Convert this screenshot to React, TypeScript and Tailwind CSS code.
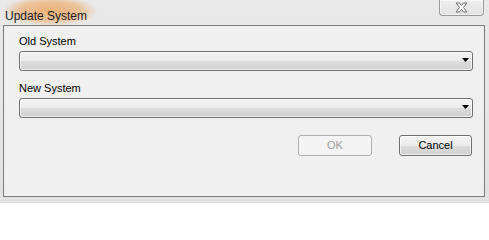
import React from "react";

const font = { fontFamily: '"Liberation Sans", Arial, sans-serif' };

function ComboBox() {
  return (
    <div className="relative h-[20px] w-full rounded-[3px] border border-[#707070] bg-[linear-gradient(to_bottom,#f3f3f3_0%,#ebebeb_50%,#dddddd_51%,#d0d0d0_100%)] shadow-[inset_0_0_0_1px_rgba(255,255,255,0.7)]">
      <div className="flex h-full items-center justify-end pr-[3px] pb-[2px]">
        <svg width="7" height="4" viewBox="0 0 7 4">
          <polygon points="0,0 7,0 3.5,4" fill="#000" />
        </svg>
      </div>
    </div>
  );
}

function CloseButton() {
  return (
    <div className="flex h-[16px] w-[45px] items-center justify-center rounded-b-[4px] border border-t-0 border-[#9a9a9a] bg-[linear-gradient(to_bottom,#efefef,#e2e2e2)] shadow-[inset_0_0_0_1px_rgba(255,255,255,0.6)]">
      <svg width="15" height="11" viewBox="0 0 15 11">
        <polygon
          points="2,1 5.5,1 7.5,3.5 9.5,1 13,1 9.5,5.5 13,10 9.5,10 7.5,7.5 5.5,10 2,10 5.5,5.5"
          fill="#ffffff"
          stroke="#6f6f6f"
          strokeWidth="1"
          strokeLinejoin="round"
        />
      </svg>
    </div>
  );
}

export default function App() {
  return (
    <div
      className="flex h-[203px] w-[489px] flex-col overflow-hidden bg-[linear-gradient(to_bottom,#e9e9e9,#e2e2e2)]"
      style={font}
    >
      {/* title bar */}
      <div className="flex h-[25px] items-start">
        <div className="relative pl-[5px] pt-[3px]">
          <div className="absolute left-[2px] top-[-4px] h-[30px] w-[96px] bg-[radial-gradient(ellipse_at_center,rgba(236,168,100,0.85)_0%,rgba(236,168,100,0.6)_45%,rgba(236,168,100,0)_70%)]" />
          <span className="relative text-[12px] leading-[15px] text-[#1b1b1b]">
            Update System
          </span>
        </div>
        <div className="ml-auto mr-[5px]">
          <CloseButton />
        </div>
      </div>

      {/* client area */}
      <div className="mx-[3px] h-[172px] w-[482px] border border-[#7c7c7c] bg-[#f0f0f0] pl-[15px] pr-[11px] pt-[9px]">
        <div className="text-[11px] leading-[13px] text-black">Old System</div>
        <div className="mt-[3px]">
          <ComboBox />
        </div>
        <div className="mt-[11px] text-[11px] leading-[13px] text-black">New System</div>
        <div className="mt-[3px]">
          <ComboBox />
        </div>
        <div className="mt-[17px] flex justify-end gap-[27px] pr-[1px]">
          <button
            disabled
            className="h-[21px] w-[74px] rounded-[3px] border border-[#adb2b5] bg-[#f4f4f4] text-[11px] text-[#a0a0a0]"
          >
            OK
          </button>
          <button className="h-[21px] w-[73px] rounded-[3px] border border-[#707070] bg-[linear-gradient(to_bottom,#f3f3f3_0%,#ebebeb_50%,#dddddd_51%,#d0d0d0_100%)] text-[11px] text-black shadow-[inset_0_0_0_1px_rgba(255,255,255,0.7)]">
            Cancel
          </button>
        </div>
      </div>
    </div>
  );
}
